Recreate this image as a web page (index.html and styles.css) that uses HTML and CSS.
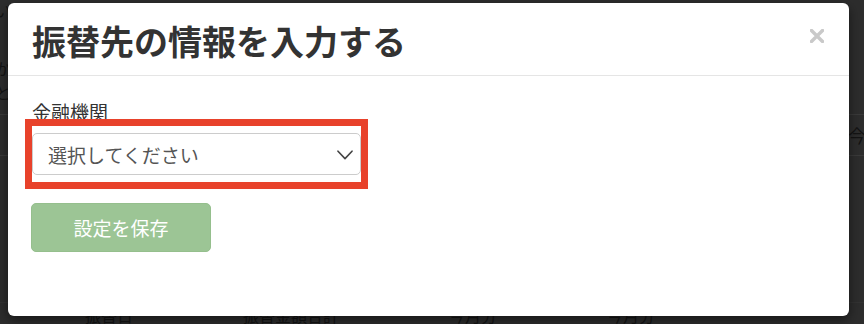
FILE: index.html
```html
<!DOCTYPE html>
<html lang="ja">
<head>
<meta charset="utf-8">
<title>振替先の情報を入力する</title>
<link rel="stylesheet" href="styles.css">
</head>
<body>
<div class="page">
  <div class="bg-lines">
    <p class="bg-line bg-l1"><span>い</span></p>
    <p class="bg-line bg-l2"><span>か</span></p>
    <p class="bg-line bg-l3"><span>と</span></p>
  </div>
  <div class="bg-table">
    <div class="bg-row"><span class="bg-cell-right">今月</span></div>
  </div>
  <div class="bg-bottom">
    <span>振替日</span><span>振替金額合計</span><span>今月分</span><span>今月分</span>
  </div>
</div>

<div class="modal">
  <div class="modal-header">
    <h4 class="modal-title">振替先の情報を入力する</h4>
    <svg class="close" width="14" height="14" viewBox="0 0 14 14" aria-label="閉じる">
      <path d="M1.5 1.5 L12.5 12.5 M12.5 1.5 L1.5 12.5" stroke="#c9c9c9" stroke-width="3.4" stroke-linecap="square" fill="none"/>
    </svg>
  </div>
  <div class="modal-body">
    <label class="field-label">金融機関</label>
    <div class="highlight">
      <div class="select">
        <span class="select-text">選択してください</span>
        <svg class="chevron" width="16" height="10" viewBox="0 0 16 10">
          <path d="M1 1.2 L8 8.6 L15 1.2" stroke="#444" stroke-width="1.6" fill="none" stroke-linecap="round" stroke-linejoin="round"/>
        </svg>
      </div>
    </div>
    <button class="btn-save" disabled>設定を保存</button>
  </div>
</div>
</body>
</html>
```

FILE: styles.css
```css
html, body {
  margin: 0;
  padding: 0;
}

body {
  width: 864px;
  height: 324px;
  overflow: hidden;
  background: #2d2d2d;
  font-family: "Noto Sans CJK JP", "Noto Sans", sans-serif;
  position: relative;
}

.page {
  color: #141414;
  font-size: 16px;
}

.bg-lines {
  width: 11px;
  overflow: hidden;
}

.bg-line {
  margin: 0;
  line-height: 20px;
  height: 20px;
  display: flex;
  justify-content: flex-end;
  white-space: nowrap;
}

.bg-l1 {
  padding-top: 0;
}

.bg-l2 {
  margin-top: 38px;
}

.bg-l3 {
  margin-top: 4px;
}

.bg-table {
  margin-top: 12px;
  border-top: 1px solid #3a3a3a;
  border-bottom: 1px solid #3a3a3a;
}

.bg-row {
  height: 40px;
  display: flex;
  align-items: center;
  justify-content: flex-end;
  margin-right: -20px;
}

.bg-cell-right {
  font-size: 18px;
}

.bg-bottom {
  margin-top: 146px;
  display: flex;
  gap: 110px;
  padding-left: 85px;
  font-size: 16px;
  border-top: 1px solid #333;
}

.modal {
  position: absolute;
  left: 8px;
  top: 3px;
  width: 841px;
  height: 313px;
  background: #fff;
  border-radius: 6px;
  box-shadow: 0 4px 12px rgba(0, 0, 0, 0.5);
  box-sizing: border-box;
}

.modal-header {
  height: 73px;
  box-sizing: border-box;
  display: flex;
  align-items: center;
  justify-content: space-between;
  padding: 0 25px 0 24px;
  border-bottom: 1px solid #e5e5e5;
}

.modal-title {
  margin: 0;
  font-size: 34px;
  font-weight: 700;
  line-height: 40px;
  color: #333;
  padding-top: 3px;
}

.close {
  display: block;
  margin-top: -6px;
}

.modal-body {
  padding: 23px 24px 0 24px;
}

.field-label {
  display: block;
  font-size: 19px;
  line-height: 26px;
  color: #333;
  margin-bottom: 1px;
}

.highlight {
  width: 329px;
  padding: 7px 0;
  outline: 7px solid #e8422b;
}

.select {
  height: 42px;
  box-sizing: border-box;
  border: 1px solid #cccccc;
  border-radius: 5px;
  display: flex;
  align-items: center;
  justify-content: space-between;
  padding: 0 7px 0 15px;
  background: #fff;
}

.select-text {
  font-size: 19px;
  color: #555;
  line-height: 1;
}

.chevron {
  display: block;
  margin-top: 1px;
}

.btn-save {
  margin-top: 21px;
  margin-left: -1px;
  width: 180px;
  height: 49px;
  border: 1px solid #95bf8d;
  border-radius: 5px;
  background: #9cc595;
  color: #fff;
  font-family: "Noto Sans CJK JP", "Noto Sans", sans-serif;
  font-size: 19px;
  padding: 0;
  display: block;
}
```
